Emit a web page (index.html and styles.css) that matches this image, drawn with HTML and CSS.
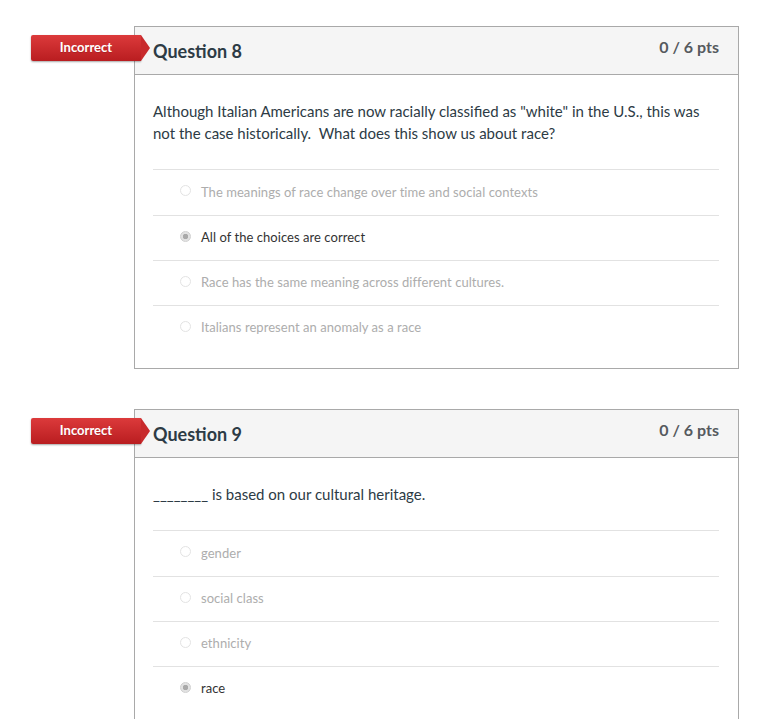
FILE: index.html
```html
<!DOCTYPE html>
<html>
<head>
<meta charset="utf-8">
<link rel="stylesheet" href="styles.css">
</head>
<body>
<div class="page">
  <div class="question">
    <div class="badge">Incorrect</div>
    <div class="q-header">
      <span class="q-title">Question 8</span>
      <span class="q-pts">0 / 6 pts</span>
    </div>
    <div class="q-body">
      <p class="q-text">Although Italian Americans are now racially classified as "white" in the U.S., this was not the case historically.&nbsp; What does this show us about race?</p>
      <ul class="answers">
        <li class="answer"><span class="radio"></span><span class="a-text">The meanings of race change over time and social contexts</span></li>
        <li class="answer selected"><span class="radio"></span><span class="a-text">All of the choices are correct</span></li>
        <li class="answer"><span class="radio"></span><span class="a-text">Race has the same meaning across different cultures.</span></li>
        <li class="answer"><span class="radio"></span><span class="a-text">Italians represent an anomaly as a race</span></li>
      </ul>
    </div>
  </div>

  <div class="question">
    <div class="badge">Incorrect</div>
    <div class="q-header">
      <span class="q-title">Question 9</span>
      <span class="q-pts">0 / 6 pts</span>
    </div>
    <div class="q-body">
      <p class="q-text">________ is based on our cultural heritage.</p>
      <ul class="answers">
        <li class="answer"><span class="radio"></span><span class="a-text">gender</span></li>
        <li class="answer"><span class="radio"></span><span class="a-text">social class</span></li>
        <li class="answer"><span class="radio"></span><span class="a-text">ethnicity</span></li>
        <li class="answer selected"><span class="radio"></span><span class="a-text">race</span></li>
      </ul>
    </div>
  </div>
</div>
</body>
</html>
```

FILE: styles.css
```css
html, body {
  margin: 0;
  padding: 0;
  background: #ffffff;
}

body {
  font-family: Lato, "Open Sans", "Liberation Sans", sans-serif;
  color: #2d3b45;
}

.page {
  display: flex;
  flex-direction: column;
  gap: 40px;
  padding: 26px 32px 0 134px;
}

.question {
  position: relative;
  width: 603px;
  border: 1px solid #a9a9a9;
  background: #fff;
}

.badge {
  position: absolute;
  left: -104px;
  top: 8px;
  width: 110px;
  height: 26px;
  line-height: 24px;
  box-sizing: border-box;
  text-align: center;
  color: #fff;
  font-size: 13px;
  font-weight: 700;
  background: linear-gradient(#dc3a3b, #b91d20);
  border-radius: 2px 0 0 2px;
  box-shadow: 0 1px 2px rgba(0,0,0,0.35);
  text-shadow: 0 1px 0 rgba(0,0,0,0.15);
}

.badge::after {
  content: "";
  position: absolute;
  right: -9px;
  top: 0;
  width: 0;
  height: 0;
  border-top: 13px solid transparent;
  border-bottom: 13px solid transparent;
  border-left: 9px solid #c82a2c;
}

.q-header {
  display: flex;
  justify-content: space-between;
  align-items: flex-start;
  height: 47px;
  padding: 0 19px 0 18px;
  background: #f5f5f5;
  border-bottom: 1px solid #a9a9a9;
}

.q-title {
  font-size: 18px;
  font-weight: 700;
  color: #2d3b45;
  margin-top: 13px;
}

.q-pts {
  font-size: 16px;
  font-weight: 700;
  color: #555a5e;
  margin-top: 10px;
}

.q-body {
  padding: 25px 19px 18px 18px;
}

.q-text {
  margin: 0 0 25px 0;
  font-size: 15px;
  line-height: 22px;
  color: #2d3b45;
}

.answers {
  list-style: none;
  margin: 0;
  padding: 0;
}

.answer {
  display: flex;
  align-items: center;
  height: 42px;
  padding-bottom: 2px;
  box-sizing: content-box;
  border-top: 1px solid #e2e2e2;
  padding-left: 27px;
  font-size: 13px;
  letter-spacing: 0.05px;
  color: #adadad;
}

.answer:first-child {
  height: 43px;
}

.radio {
  width: 11px;
  height: 11px;
  border-radius: 50%;
  border: 1px solid #e3e3e3;
  box-sizing: border-box;
  margin-right: 10px;
  margin-top: -2px;
  background: #fff;
}

.answer.selected {
  color: #333;
}

.answer.selected .radio {
  border: 1px solid #cfcfcf;
  background: radial-gradient(circle, #a9a9a9 0 2.5px, #e2e2e2 3px);
}
```
